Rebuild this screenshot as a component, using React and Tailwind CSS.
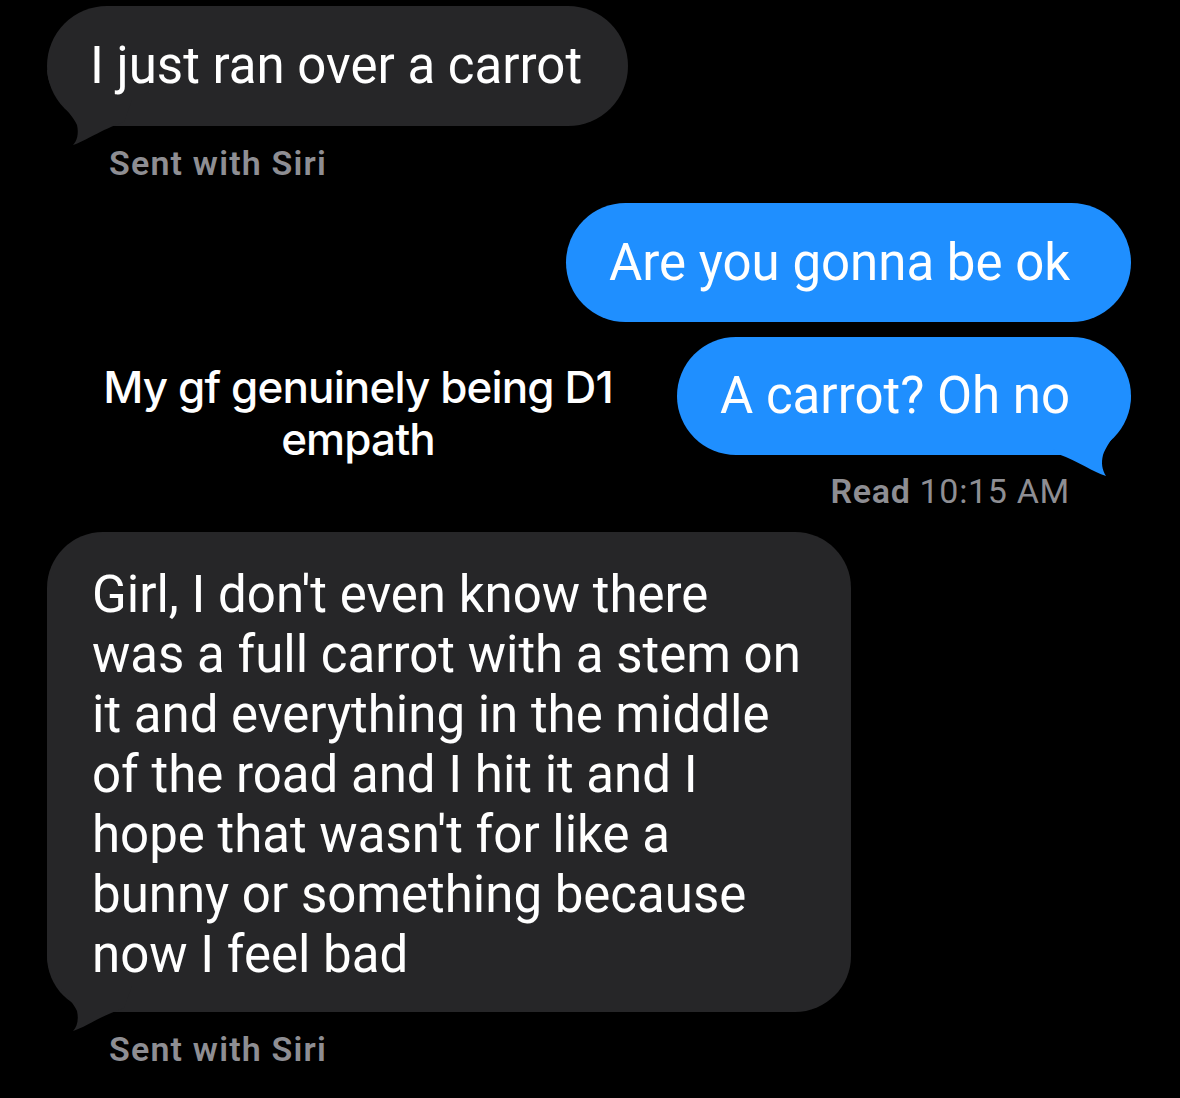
import React from "react";

function GrayTail() {
  return (
    <svg
      className="absolute left-0 bottom-[-24px]"
      width="90"
      height="80"
      viewBox="47 70 90 80"
    >
      <path
        d="M47 70 C48 95 72 112 77 125 C79 134 77 141 73 145 C86 141 100 130 124 122 L132 100 L132 70 Z"
        fill="#262628"
      />
    </svg>
  );
}

function BlueTail() {
  return (
    <svg
      className="absolute right-0 bottom-[-25px]"
      width="91"
      height="85"
      viewBox="1040 395 91 85"
    >
      <path
        d="M1131 395 C1130 420 1108 440 1103 455 C1101 463 1102 470 1106 476 C1093 472 1080 462 1058 454 L1045 440 L1045 395 Z"
        fill="#1f8fff"
      />
    </svg>
  );
}

const bubbleFont = "font-['Roboto','Liberation_Sans',sans-serif]";

export default function App() {
  const lines = [
    "Girl, I don't even know there",
    "was a full carrot with a stem on",
    "it and everything in the middle",
    "of the road and I hit it and I",
    "hope that wasn't for like a",
    "bunny or something because",
    "now I feel bad",
  ];
  return (
    <div className={`w-[1180px] h-[1098px] bg-black overflow-hidden flex flex-col ${bubbleFont}`}>
      {/* Bubble 1 */}
      <div className="relative mt-[6px] ml-[47px] w-[581px] h-[120px] rounded-[60px] bg-[#262628] flex items-center pl-[43px]">
        <GrayTail />
        <span className="relative text-white text-[51px] leading-[60px] whitespace-nowrap">
          I just ran over a carrot
        </span>
      </div>
      <div className="ml-[109px] mt-[17px] h-[40px] leading-[40px] text-[34px] tracking-[0.035em] font-semibold text-[#8e8e93] whitespace-nowrap">
        Sent with Siri
      </div>

      {/* Blue bubble 1 */}
      <div className="self-end mr-[49px] mt-[20px] w-[565px] h-[119px] rounded-[60px] bg-[#1f8fff] flex items-center pl-[43px]">
        <span className="text-white text-[51px] leading-[60px] whitespace-nowrap">
          Are you gonna be ok
        </span>
      </div>

      {/* Row with caption and blue bubble 2 */}
      <div className="mt-[15px] h-[118px] flex items-start">
        <div className="ml-[88px] mt-[24px] w-[540px] text-center text-white text-[44px] leading-[52px] font-medium tracking-[-0.02em] font-['Inter',sans-serif]">
          My gf genuinely being D1
          <br />
          empath
        </div>
        <div className="relative ml-auto mr-[49px] w-[454px] h-[118px] rounded-[59px] bg-[#1f8fff] flex items-center pl-[43px]">
          <BlueTail />
          <span className="relative text-white text-[51px] leading-[60px] whitespace-nowrap">
            A carrot? Oh no
          </span>
        </div>
      </div>

      <div className="self-end mr-[110px] mt-[16px] h-[40px] leading-[40px] text-[34px] tracking-[0.02em] text-[#8e8e93] whitespace-nowrap">
        <span className="font-semibold">Read</span> 10:15 AM
      </div>

      {/* Gray bubble 2 */}
      <div className="relative mt-[21px] ml-[47px] w-[804px] h-[480px] rounded-[56px] bg-[#262628] pl-[45px] pt-[33px]">
        <GrayTail />
        <div className="relative text-white text-[51px] leading-[60px]">
          {lines.map((l) => (
            <div key={l} className="whitespace-nowrap">
              {l}
            </div>
          ))}
        </div>
      </div>
      <div className="ml-[109px] mt-[17px] h-[40px] leading-[40px] text-[34px] tracking-[0.035em] font-semibold text-[#8e8e93] whitespace-nowrap">
        Sent with Siri
      </div>
    </div>
  );
}
